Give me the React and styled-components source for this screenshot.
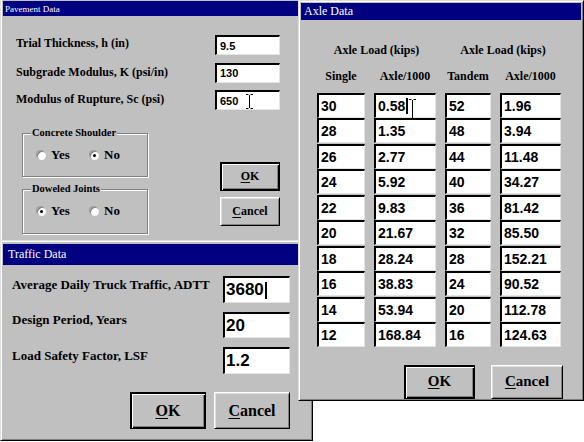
import React from 'react';
import styled, { createGlobalStyle } from 'styled-components';

const GlobalStyle = createGlobalStyle`
	html, body {
		margin: 0;
		padding: 0;
		background: #ffffff;
	}
	* {
		box-sizing: border-box;
	}
`;

const SERIF = '"Liberation Serif", "Times New Roman", serif';
const SANS = '"Liberation Sans", Arial, sans-serif';

const Desktop = styled.div`
	position: relative;
	width: 584px;
	height: 442px;
	overflow: hidden;
	background: #ffffff;
`;

// each dialog sits on the desktop at its own place
const Window = styled.section`
	position: absolute;
	left: ${(p) => p.$x}px;
	top: ${(p) => p.$y}px;
	width: ${(p) => p.$w}px;
	height: ${(p) => p.$h}px;
	z-index: ${(p) => p.$z};
	display: flex;
	flex-direction: column;
	padding: ${(p) => p.$padTop || 2}px 2px 2px 2px;
	background: #c0c0c0;
	border: 1px solid;
	border-color: #dfdfdf #000000 #000000 #dfdfdf;
	box-shadow: inset 1px 1px #ffffff, inset -1px -1px #808080;
`;

const TitleBar = styled.header`
	height: ${(p) => p.$h}px;
	flex-shrink: 0;
	display: flex;
	align-items: center;
	padding-left: ${(p) => p.$pad || 2}px;
	background: #000080;
	color: #ffffff;
	font-family: ${SERIF};
	font-size: ${(p) => p.$size}px;
	white-space: nowrap;
`;

const Field = styled.div`
	position: relative;
	width: ${(p) => p.$w}px;
	height: ${(p) => p.$h}px;
	display: flex;
	align-items: center;
	padding-left: ${(p) => p.$pad || 3}px;
	background: #ffffff;
	border-style: solid;
	border-width: 2px 1px 1px 2px;
	border-color: #000000 #e4e4e4 #e4e4e4 #000000;
	font-family: ${SANS};
	font-weight: bold;
	font-size: ${(p) => p.$size}px;
	color: #000000;
	white-space: nowrap;
`;

const Caret = styled.span`
	display: inline-block;
	width: 2px;
	height: ${(p) => p.$h}px;
	margin-left: 1px;
	background: #000000;
`;

const Beam = styled.svg`
	position: absolute;
	left: ${(p) => p.$x}px;
	top: ${(p) => p.$y}px;
`;

const IBeam = ({ x, y, h }) => (
	<Beam $x={x} $y={y} width="7" height={h} viewBox={`0 0 7 ${h}`}>
		<path
			d={`M0 0.5H2.5M4.5 0.5H7M3.5 1V${h - 1}M0 ${h - 0.5}H2.5M4.5 ${h - 0.5}H7`}
			stroke="#000"
			strokeWidth="1"
			fill="none"
		/>
	</Beam>
);

const Button = styled.button`
	width: ${(p) => p.$w}px;
	height: ${(p) => p.$h}px;
	padding: 0;
	background: #c0c0c0;
	color: #000000;
	font-family: ${SERIF};
	font-weight: bold;
	font-size: ${(p) => p.$size}px;
	border: 1px solid;
	border-color: ${(p) => (p.$default ? '#000000' : '#ffffff #000000 #000000 #ffffff')};
	box-shadow: ${(p) =>
		p.$default
			? 'inset 1px 1px #000, inset 2px 2px #fff, inset -1px -1px #000, inset -2px -2px #808080'
			: 'inset 1px 1px #dfdfdf, inset -1px -1px #808080'};
	cursor: default;

	u {
		text-decoration-thickness: 1px;
		text-underline-offset: 2px;
	}
`;

/* ---------- Pavement Data ---------- */

const PavementBody = styled.div`
	padding: 19px 0 0 13px;
`;

const FormGrid = styled.div`
	display: grid;
	grid-template-columns: ${(p) => p.$label}px ${(p) => p.$field}px;
	row-gap: ${(p) => p.$gap}px;
	align-items: start;
`;

const Label = styled.div`
	font-family: ${SERIF};
	font-weight: bold;
	font-size: ${(p) => p.$size}px;
	line-height: 16px;
	padding-top: ${(p) => p.$top}px;
	color: #000000;
	white-space: nowrap;
`;

const LowerSection = styled.div`
	display: flex;
	justify-content: space-between;
	width: 258px;
	margin: 23px 0 0 6px;
`;

const Groups = styled.div`
	display: flex;
	flex-direction: column;
	gap: 12px;
`;

const Group = styled.div`
	position: relative;
	width: 126px;
	height: ${(p) => p.$h}px;
	padding: 15px 0 0 14px;
	border: 1px solid #808080;
	box-shadow: inset 1px 1px #ffffff, 1px 1px #ffffff;
`;

const Caption = styled.span`
	position: absolute;
	top: -7px;
	left: 8px;
	padding: 0 1px;
	background: #c0c0c0;
	font-family: ${SERIF};
	font-weight: bold;
	font-size: 10.5px;
	line-height: 12px;
	white-space: nowrap;
`;

const RadioRow = styled.div`
	display: flex;
	align-items: center;
	height: 12px;
`;

const Option = styled.label`
	display: flex;
	align-items: center;
	gap: 5px;
	width: ${(p) => p.$w}px;
	font-family: ${SERIF};
	font-weight: bold;
	font-size: 13px;
`;

const Radio = styled.span`
	position: relative;
	width: 9px;
	height: 9px;
	flex-shrink: 0;
	border-radius: 50%;
	background: #ffffff;
	box-shadow: inset 1px 1px #808080, -1px -1px 0 #9a9a9a;

	&::after {
		content: '';
		display: ${(p) => (p.$checked ? 'block' : 'none')};
		position: absolute;
		left: 3px;
		top: 3px;
		width: 3px;
		height: 3px;
		border-radius: 50%;
		background: #000000;
	}
`;

const ButtonColumn = styled.div`
	display: flex;
	flex-direction: column;
	gap: 6px;
	padding-top: 29px;
`;

/* ---------- Traffic Data ---------- */

const TrafficBody = styled.div`
	padding: 11px 0 0 9px;
`;

const ButtonRow = styled.div`
	display: flex;
	justify-content: flex-end;
	gap: ${(p) => p.$gap}px;
	width: ${(p) => p.$w}px;
	margin-top: ${(p) => p.$top}px;
`;

/* ---------- Axle Data ---------- */

const AxleBody = styled.div`
	padding: 22px 0 0 16px;
`;

const AxleGrid = styled.div`
	display: grid;
	grid-template-columns: 48px 62px 46px 61px;
	column-gap: 9px;
	grid-auto-rows: 25px;
	row-gap: 0.5px;
	width: 244px;
`;

const HeadCell = styled.div`
	grid-column: span ${(p) => p.$span || 1};
	height: 16px;
	line-height: 16px;
	text-align: center;
	font-family: ${SERIF};
	font-weight: bold;
	font-size: 12px;
	white-space: nowrap;
`;

const axleRows = [
	['30', '0.58', '52', '1.96'],
	['28', '1.35', '48', '3.94'],
	['26', '2.77', '44', '11.48'],
	['24', '5.92', '40', '34.27'],
	['22', '9.83', '36', '81.42'],
	['20', '21.67', '32', '85.50'],
	['18', '28.24', '28', '152.21'],
	['16', '38.83', '24', '90.52'],
	['14', '53.94', '20', '112.78'],
	['12', '168.84', '16', '124.63'],
];

const colWidths = [48, 62, 46, 61];

const OkLabel = () => (
	<>
		<u>O</u>K
	</>
);

const CancelLabel = () => (
	<>
		<u>C</u>ancel
	</>
);

const PavementWindow = () => (
	<Window $x={0} $y={-2} $w={320} $h={244} $z={1}>
		<TitleBar $h={15} $size={9} $pad={2}>
			Pavement Data
		</TitleBar>
		<PavementBody>
			<FormGrid $label={199} $field={65} $gap={7.5}>
				<Label $size={12} $top={0}>Trial Thickness, h (in)</Label>
				<Field $w={65} $h={20} $size={11}>9.5</Field>
				<Label $size={12} $top={1}>Subgrade Modulus, K (psi/in)</Label>
				<Field $w={65} $h={20} $size={11}>130</Field>
				<Label $size={12} $top={1}>Modulus of Rupture, Sc (psi)</Label>
				<Field $w={65} $h={20} $size={11}>
					650
					<IBeam x={29} y={2} h={15} />
				</Field>
			</FormGrid>
			<LowerSection>
				<Groups>
					<Group $h={44}>
						<Caption>Concrete Shoulder</Caption>
						<RadioRow>
							<Option $w={53}>
								<Radio />
								Yes
							</Option>
							<Option $w={40}>
								<Radio $checked />
								No
							</Option>
						</RadioRow>
					</Group>
					<Group $h={45}>
						<Caption>Doweled Joints</Caption>
						<RadioRow>
							<Option $w={53}>
								<Radio $checked />
								Yes
							</Option>
							<Option $w={40}>
								<Radio />
								No
							</Option>
						</RadioRow>
					</Group>
				</Groups>
				<ButtonColumn>
					<Button $w={60} $h={29} $size={12} $default>
						<OkLabel />
					</Button>
					<Button $w={60} $h={29} $size={12}>
						<CancelLabel />
					</Button>
				</ButtonColumn>
			</LowerSection>
		</PavementBody>
	</Window>
);

const TrafficWindow = () => (
	<Window $x={0} $y={240} $w={313} $h={201} $z={2} $padTop={3}>
		<TitleBar $h={21} $size={12} $pad={5}>
			Traffic Data
		</TitleBar>
		<TrafficBody>
			<FormGrid $label={211} $field={67} $gap={9}>
				<Label $size={13} $top={1}>Average Daily Truck Traffic, ADTT</Label>
				<Field $w={67} $h={27} $size={17} $pad={1}>
					3680
					<Caret $h={17} />
				</Field>
				<Label $size={13} $top={0}>Design Period, Years</Label>
				<Field $w={67} $h={26} $size={17} $pad={1}>20</Field>
				<Label $size={13} $top={1}>Load Safety Factor, LSF</Label>
				<Field $w={67} $h={27} $size={17} $pad={1}>1.2</Field>
			</FormGrid>
			<ButtonRow $w={278} $gap={8} $top={18}>
				<Button $w={76} $h={37} $size={16} $default>
					<OkLabel />
				</Button>
				<Button $w={76} $h={37} $size={16}>
					<CancelLabel />
				</Button>
			</ButtonRow>
		</TrafficBody>
	</Window>
);

const AxleWindow = () => (
	<Window $x={298} $y={0} $w={286} $h={401} $z={3}>
		<TitleBar $h={17} $size={12} $pad={3}>
			Axle Data
		</TitleBar>
		<AxleBody>
			<AxleGrid>
				<HeadCell $span={2}>Axle Load (kips)</HeadCell>
				<HeadCell $span={2}>Axle Load (kips)</HeadCell>
				<HeadCell>Single</HeadCell>
				<HeadCell>Axle/1000</HeadCell>
				<HeadCell>Tandem</HeadCell>
				<HeadCell>Axle/1000</HeadCell>
			</AxleGrid>
			<AxleGrid>
				{axleRows.map((row, r) =>
					row.map((value, c) => (
						<Field key={`${r}-${c}`} $w={colWidths[c]} $h={25} $size={14} $pad={2}>
							{value}
							{r === 0 && c === 1 && (
								<>
									<Caret $h={16} />
									<IBeam x={33} y={4} h={20} />
								</>
							)}
						</Field>
					))
				)}
			</AxleGrid>
			<ButtonRow $w={246} $gap={16} $top={17.5}>
				<Button $w={71} $h={34} $size={15} $default>
					<OkLabel />
				</Button>
				<Button $w={72} $h={34} $size={15}>
					<CancelLabel />
				</Button>
			</ButtonRow>
		</AxleBody>
	</Window>
);

const App = () => {
	return (
		<>
			<GlobalStyle />
			<Desktop>
				<PavementWindow />
				<TrafficWindow />
				<AxleWindow />
			</Desktop>
		</>
	);
};

export default App;
